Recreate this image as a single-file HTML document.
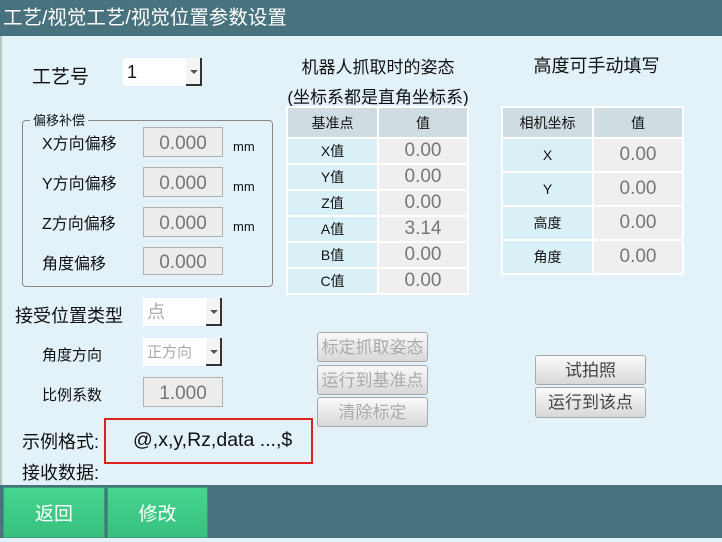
<!DOCTYPE html>
<html><head><meta charset="utf-8"><style>
*{margin:0;padding:0;box-sizing:border-box}
body{width:722px;height:538px;background:#e2f2f8;position:relative;overflow:hidden;font-family:"Liberation Sans","Noto Sans CJK SC",sans-serif;color:#111}
.a{position:absolute;white-space:nowrap}
.hdr{left:0;top:0;width:722px;height:36px;background:#48727e;color:#fff;font-size:19.5px;line-height:36px;padding-left:3px}
.inp{position:absolute;background:#ececec;border:1px solid #b0b0b0;color:#777;font-size:19px;text-align:center;line-height:31px}
.combo{position:absolute;background:#fff;height:28px;font-size:18px;line-height:29px;padding-left:4px}
.combo .ar{position:absolute;right:0;top:0;width:16px;height:28px;border-right:2px solid #333;border-bottom:2px solid #333;background:#f4f4f4}
.combo .ar:after{content:"";position:absolute;left:4px;top:12px;border-left:4px solid transparent;border-right:4px solid transparent;border-top:4px solid #555}
.lbl{font-size:16px;line-height:20px}
.btn{position:absolute;border:1px solid #a8a8a8;border-radius:3px;background:linear-gradient(#fafafa,#d8d8d8);text-align:center;font-size:17px;line-height:29px;color:#444}
.dis{color:#aaa}
table{position:absolute;border-collapse:collapse;font-size:14px;text-align:center}
td{border:2px solid #fff;padding:0}
td.k{background:#d9f0f7}
td.v{background:#efefef;color:#777;font-size:19px}
tr.h td{background:#cfdde3;font-size:14px;color:#111}
.gb{position:absolute;left:22px;top:120px;width:251px;height:167px;border:1px solid #888;border-radius:4px}
.grn{position:absolute;top:487px;height:51px;background:linear-gradient(#46d690,#38c07e);color:#fff;font-size:19px;line-height:54px;text-align:center;border:1px solid #3a9a70}
</style></head><body>
<div class="a hdr">工艺/视觉工艺/视觉位置参数设置</div>
<div class="a" style="left:0;top:36px;width:2px;height:449px;background:#b8c8c0"></div>
<div class="a" style="left:32px;top:62px;font-size:19px">工艺号</div>
<div class="combo" style="left:123px;top:58px;width:79px">1<div class="ar"></div></div>

<div class="gb"></div>
<div class="a" style="left:30px;top:110px;font-size:13px;background:#e2f2f8;padding:0 3px">偏移补偿</div>
<div class="a lbl" style="left:42px;top:135px">X方向偏移</div>
<div class="inp" style="left:143px;top:127px;width:80px;height:30px">0.000</div>
<div class="a" style="left:233px;top:139px;font-size:13px">mm</div>
<div class="a lbl" style="left:42px;top:175px">Y方向偏移</div>
<div class="inp" style="left:143px;top:167px;width:80px;height:30px">0.000</div>
<div class="a" style="left:233px;top:179px;font-size:13px">mm</div>
<div class="a lbl" style="left:42px;top:215px">Z方向偏移</div>
<div class="inp" style="left:143px;top:207px;width:80px;height:30px">0.000</div>
<div class="a" style="left:233px;top:219px;font-size:13px">mm</div>
<div class="a lbl" style="left:42px;top:255px">角度偏移</div>
<div class="inp" style="left:143px;top:247px;width:80px;height:28px;line-height:29px">0.000</div>

<div class="a" style="left:278px;top:53px;width:200px;text-align:center;font-size:17px">机器人抓取时的姿态</div>
<div class="a" style="left:270px;top:83px;width:216px;text-align:center;font-size:17px">(坐标系都是直角坐标系)</div>
<table style="left:286px;top:106px;width:183px">
<tr class="h" style="height:31px"><td style="width:91px">基准点</td><td>值</td></tr>
<tr style="height:26px"><td class="k">X值</td><td class="v">0.00</td></tr>
<tr style="height:26px"><td class="k">Y值</td><td class="v">0.00</td></tr>
<tr style="height:26px"><td class="k">Z值</td><td class="v">0.00</td></tr>
<tr style="height:26px"><td class="k">A值</td><td class="v">3.14</td></tr>
<tr style="height:26px"><td class="k">B值</td><td class="v">0.00</td></tr>
<tr style="height:26px"><td class="k">C值</td><td class="v">0.00</td></tr>
</table>

<div class="a" style="left:496px;top:52px;width:201px;text-align:center;font-size:18px">高度可手动填写</div>
<table style="left:501px;top:106px;width:183px">
<tr class="h" style="height:31px"><td style="width:91px">相机坐标</td><td>值</td></tr>
<tr style="height:34px"><td class="k">X</td><td class="v">0.00</td></tr>
<tr style="height:34px"><td class="k">Y</td><td class="v">0.00</td></tr>
<tr style="height:34px"><td class="k">高度</td><td class="v">0.00</td></tr>
<tr style="height:34px"><td class="k">角度</td><td class="v">0.00</td></tr>
</table>

<div class="a" style="left:15px;top:302px;font-size:18px">接受位置类型</div>
<div class="combo" style="left:143px;top:298px;width:79px;color:#aaa">点<div class="ar"></div></div>
<div class="a" style="left:42px;top:344px;font-size:15px">角度方向</div>
<div class="combo" style="left:143px;top:338px;width:79px;color:#aaa;font-size:15px">正方向<div class="ar"></div></div>
<div class="a" style="left:42px;top:384px;font-size:15px">比例系数</div>
<div class="inp" style="left:143px;top:377px;width:80px;height:30px">1.000</div>

<div class="btn dis" style="left:317px;top:332px;width:111px;height:30px">标定抓取姿态</div>
<div class="btn dis" style="left:317px;top:365px;width:111px;height:30px">运行到基准点</div>
<div class="btn dis" style="left:317px;top:397px;width:111px;height:30px">清除标定</div>
<div class="btn" style="left:535px;top:355px;width:111px;height:30px">试拍照</div>
<div class="btn" style="left:535px;top:387px;width:111px;height:31px">运行到该点</div>

<div class="a" style="left:22px;top:428px;font-size:18px">示例格式:</div>
<div class="a" style="left:22px;top:459px;font-size:18px">接收数据:</div>
<div class="a" style="left:104px;top:418px;width:209px;height:46px;border:2px solid #e02020"></div>
<div class="a" style="left:133px;top:429px;font-size:19.5px">@,x,y,Rz,data ...,$</div>

<div class="a" style="left:0;top:485px;width:722px;height:53px;background:#48727e"></div>
<div class="grn" style="left:3px;width:102px">返回</div>
<div class="grn" style="left:107px;width:101px">修改</div>
</body></html>
